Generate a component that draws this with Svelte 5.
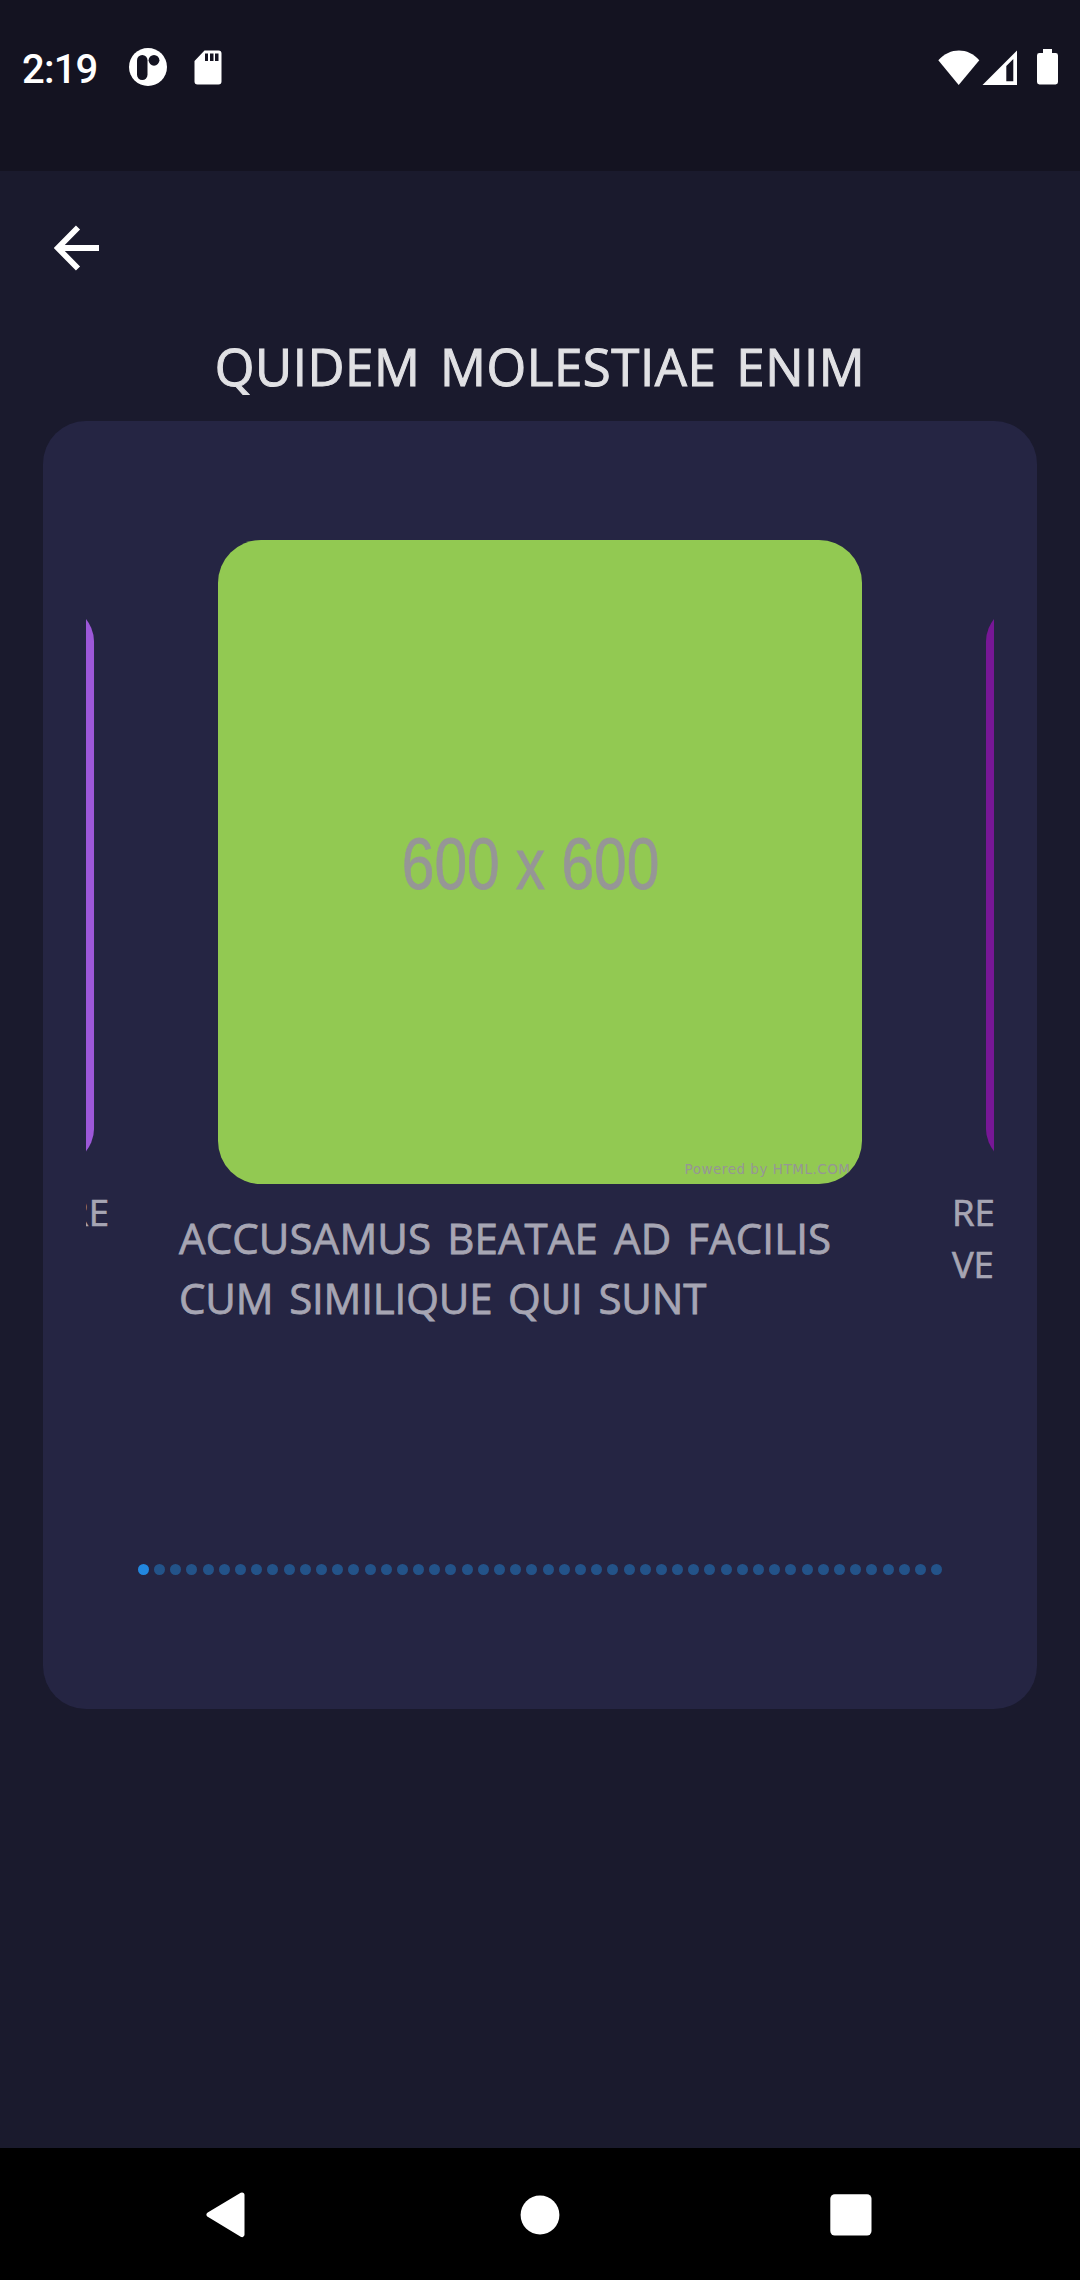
<script>
  const slides = [
    { color: '#9d58d9', lines: ['ET INVENTORE QUAE UT TEMPORE', 'EIUS VOLUPTATUM'], side: 'prev' },
    { color: '#92c952', lines: ['ACCUSAMUS BEATAE AD FACILIS', 'CUM SIMILIQUE QUI SUNT'], side: 'active' },
    { color: '#771796', lines: ['REPREHENDERIT EST DESERUNT', 'VELIT IPSAM'], side: 'next' }
  ];
  const dots = Array.from({ length: 50 }, (_, i) => i);
</script>

<div class="screen">
  <header class="status">
    <div class="left">
      <span class="time">2:19</span>
      <svg class="notif" width="38" height="38" viewBox="0 0 38 38">
        <circle cx="19" cy="19" r="19" fill="#fff" />
        <rect x="8" y="7" width="10.5" height="25" rx="5.2" fill="#141321" />
        <circle cx="25" cy="12.3" r="5.4" fill="#141321" />
      </svg>
      <svg class="sd" width="28" height="36" viewBox="0 0 28 36">
        <path d="M10.5 0.5H24.5a3 3 0 0 1 3 3V31.5a3 3 0 0 1-3 3H3.5a3 3 0 0 1-3-3V11Z" fill="#fff" />
        <path d="M11 3.5h3v7.5h-3zM16 3.5h3.5v7.5H16zM21 3.5h3.5v7.5H21z" fill="#141321" />
      </svg>
    </div>
    <div class="right">
      <svg width="42" height="36" viewBox="0 0 42 36">
        <path d="M0.3 10.2C12 -2.7 30 -2.7 41.3 10.2L20.7 35Z" fill="#fff" />
      </svg>
      <svg class="cell" width="36" height="36" viewBox="0 0 36 36">
        <path fill-rule="evenodd" d="M0.5 35L35 0.5V35ZM24.3 31.3H31.3V9L24.3 16Z" fill="#fff" />
      </svg>
      <svg class="battery" width="21" height="36" viewBox="0 0 21 36">
        <path d="M6 0h9v4h3.6a2.4 2.4 0 0 1 2.4 2.4V33a2.4 2.4 0 0 1-2.4 2.4H2.4A2.4 2.4 0 0 1 0 33V6.4A2.4 2.4 0 0 1 2.4 4H6z" fill="#fff" />
      </svg>
    </div>
  </header>

  <main>
    <button class="back" aria-label="Back">
      <svg width="46" height="46" viewBox="0 0 46 46">
        <path d="M45 23H5M24 2.500L3.800 23L24 43.500" fill="none" stroke="#fff" stroke-width="5.800" />
      </svg>
    </button>
    <h1>QUIDEM MOLESTIAE ENIM</h1>

    <section class="card">
      <div class="carousel">
        {#each slides as slide}
          <article class="slide {slide.side}">
            <svg class="picture" viewBox="0 0 644 644">
              <rect width="644" height="644" fill={slide.color} />
              {#if slide.side === 'active'}
                <text class="size" transform="translate(183.8 348.5) scale(.803 1)">600 x 600</text>
                <text class="credit" x="466.5" y="633.5" textLength="165.500">Powered by HTML.COM</text>
              {/if}
            </svg>
            <p>
              {#each slide.lines as line}
                <span>{line}</span>
              {/each}
            </p>
          </article>
        {/each}
      </div>
      <div class="dots">
        {#each dots as dot}
          <i class:on={dot === 0}></i>
        {/each}
      </div>
    </section>
  </main>

  <nav>
    <svg width="40" height="46" viewBox="0 0 40 46">
      <path d="M36 3L3 22.7L36 42.5Z" fill="#fff" stroke="#fff" stroke-width="5" stroke-linejoin="round" />
    </svg>
    <svg class="home" width="40" height="40" viewBox="0 0 40 40"><circle cx="20" cy="20" r="19.4" fill="#fff" /></svg>
    <svg width="42" height="42" viewBox="0 0 42 42"><rect x="0.3" y="0.3" width="41.2" height="41.2" rx="4.5" fill="#fff" /></svg>
  </nav>
</div>

<style>
  :global(body) { margin: 0; background: #1a1a2d; }
  .screen {
    width: 1080px;
    height: 2280px;
    display: flex;
    flex-direction: column;
    background: #1a1a2d;
    font-family: 'Open Sans', 'Noto Sans', sans-serif;
    overflow: hidden;
  }
  svg { display: block; flex: none; }
  .status {
    flex: none;
    box-sizing: border-box;
    height: 171px;
    padding: 48px 22px 0;
    background: #141321;
    display: flex;
    justify-content: space-between;
    align-items: flex-start;
  }
  .left, .right { display: flex; align-items: flex-start; }
  .time {
    width: 106.5px;
    padding-top: 1px;
    font: 500 40px/42px Roboto, sans-serif;
    letter-spacing: -.8px;
    color: #fff;
  }
  .sd { margin: 2px 0 0 27.5px; }
  .right { padding-top: 2px; }
  .cell { margin-left: 2px; }
  .battery { margin: -1px 0 0 19px; }
  main {
    flex: 1;
    display: flex;
    flex-direction: column;
    padding: 0 43px;
  }
  .back {
    margin: 54px 0 0 11px;
    padding: 0;
    border: 0;
    background: none;
    width: 46px;
    height: 46px;
  }
  h1 {
    margin: 59px 0 0;
    height: 91px;
    font-size: 51px;
    line-height: 72px;
    font-weight: 400;
    text-align: center;
    color: #e1e1e4;
    white-space: nowrap;
    letter-spacing: .55px;
    word-spacing: 6px;
    -webkit-text-stroke: 1px #e1e1e4;
  }
  .card {
    box-sizing: border-box;
    height: 1288px;
    padding: 119px 43px 0;
    border-radius: 43px;
    background: #252543;
  }
  .carousel {
    height: 1000px;
    display: flex;
    justify-content: center;
    gap: 4px;
    overflow: hidden;
  }
  .slide { flex: none; width: 722px; }
  .prev, .next { transform: scale(.87); }
  .picture {
    width: 644px;
    height: 644px;
    margin: 0 auto;
    border-radius: 43px;
  }
  .size { font: 73px 'Liberation Sans', sans-serif; fill: #969696; stroke: #969696; stroke-width: .8px; }
  .credit { font: 13.5px 'DejaVu Sans', sans-serif; fill: #969696; }
  .slide p {
    margin: 23.5px 0 0;
    font-size: 42px;
    line-height: 60px;
    color: #a6a5b3;
    white-space: nowrap;
    word-spacing: 5px;
    -webkit-text-stroke: .8px #a6a5b3;
  }
  .slide span { display: block; letter-spacing: .12px; }
  .slide span:last-child { letter-spacing: -.15px; }
  .prev p { text-align: right; padding-right: 23px; }
  .prev span:last-child { text-align: left; }
  .dots {
    display: flex;
    justify-content: center;
    gap: 5.2px;
    margin-top: 23.5px;
  }
  .dots i {
    flex: none;
    width: 11px;
    height: 11px;
    border-radius: 50%;
    background: #235389;
  }
  .dots .on { background: #2287df; }
  nav {
    flex: none;
    height: 132px;
    background: #000;
    display: flex;
    align-items: center;
    justify-content: space-between;
    box-sizing: border-box;
    padding: 1px 208px 0 206px;
  }
  .home { margin-left: 4px; }
</style>
